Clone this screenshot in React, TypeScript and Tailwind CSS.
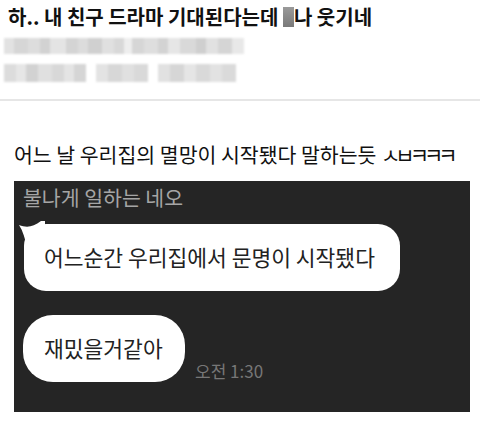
import React from 'react';

const font = { fontFamily: '"Noto Sans CJK KR", "Noto Sans", sans-serif' };

// pixelated blur blocks (widths in px, grey level classes)
const line1 = [
  ['w-[10px]', 'bg-[#e2e2e2]'], ['w-[14px]', 'bg-[#d6d6d6]'], ['w-[12px]', 'bg-[#dddddd]'], ['w-[10px]', 'bg-[#d2d2d2]'],
  ['w-[16px]', 'bg-[#e4e4e4]'], ['w-[12px]', 'bg-[#d4d4d4]'], ['w-[10px]', 'bg-[#dcdcdc]'], ['w-[14px]', 'bg-[#d0d0d0]'],
  ['w-[12px]', 'bg-[#e0e0e0]'], ['w-[10px]', 'bg-[#d8d8d8]'], ['w-[8px]', 'bg-[#eeeeee]'], ['w-[12px]', 'bg-[#d6d6d6]'],
  ['w-[14px]', 'bg-[#dedede]'], ['w-[10px]', 'bg-[#d3d3d3]'], ['w-[12px]', 'bg-[#e6e6e6]'], ['w-[16px]', 'bg-[#d9d9d9]'],
  ['w-[10px]', 'bg-[#cfcfcf]'], ['w-[12px]', 'bg-[#e1e1e1]'], ['w-[14px]', 'bg-[#d5d5d5]'], ['w-[12px]', 'bg-[#e8e8e8]'],
];

const line2a = [
  ['w-[12px]', 'bg-[#dcdcdc]'], ['w-[10px]', 'bg-[#e6e6e6]'], ['w-[12px]', 'bg-[#d2d2d2]'], ['w-[14px]', 'bg-[#e0e0e0]'],
  ['w-[12px]', 'bg-[#d8d8d8]'], ['w-[10px]', 'bg-[#e4e4e4]'], ['w-[12px]', 'bg-[#d5d5d5]'],
];
const line2b = [
  ['w-[12px]', 'bg-[#e3e3e3]'], ['w-[14px]', 'bg-[#d7d7d7]'], ['w-[12px]', 'bg-[#e0e0e0]'], ['w-[14px]', 'bg-[#d9d9d9]'],
];
const line2c = [
  ['w-[12px]', 'bg-[#e1e1e1]'], ['w-[14px]', 'bg-[#d6d6d6]'], ['w-[12px]', 'bg-[#e5e5e5]'], ['w-[14px]', 'bg-[#d9d9d9]'],
  ['w-[12px]', 'bg-[#e2e2e2]'], ['w-[14px]', 'bg-[#dadada]'],
];

function Blocks({ items, h }: { items: string[][]; h: string }) {
  return (
    <div className={`flex ${h} blur-[1px]`}>
      {items.map(([w, c], i) => (
        <div key={i} className={`${w} h-full ${c}`} />
      ))}
    </div>
  );
}

export default function App() {
  return (
    <div className="w-[480px] h-[422px] bg-white overflow-hidden" style={font}>
      {/* Post header */}
      <div className="pl-[8px] pt-[4px]">
        <h1 className="text-[20px] leading-[26px] font-bold text-[#111] flex items-center">
          하.. 내 친구 드라마 기대된다는데&nbsp;
          <span className="inline-block w-[11px] h-[20px] bg-gradient-to-b from-[#9a9a9a] to-[#7a7a7a]" />
          나 웃기네
        </h1>
      </div>
      <div className="pl-[4px] mt-[8px] flex flex-col gap-[10px]">
        <Blocks items={line1} h="h-[16px]" />
        <div className="flex gap-[10px] h-[18px]">
          <Blocks items={line2a} h="h-[18px]" />
          <Blocks items={line2b} h="h-[18px]" />
          <Blocks items={line2c} h="h-[18px]" />
        </div>
      </div>
      <div className="mt-[17px] border-t-2 border-[#e6e6e6]" />

      {/* Body */}
      <p className="mt-[38px] pl-[14px] h-[30px] text-[20.5px] leading-[30px] text-[#111] whitespace-nowrap">
        어느 날 우리집의 멸망이 시작됐다 말하는듯 <span className="text-[21px] leading-[20px] tracking-[-5px]">ㅅㅂㅋㅋㅋ</span>
      </p>

      {/* Chat screenshot */}
      <div className="mt-[12px] ml-[14px] w-[456px] h-[231px] bg-[#252525] pt-[3px] pl-[9px]">
        <div className="text-[20.5px] leading-[27px] text-[#a5a5a5]">불나게 일하는 네오</div>
        <div className="relative mt-[13px] ml-[1px] w-[376px] h-[67px] bg-white rounded-[22px] flex items-center pl-[20px]">
          <svg className="absolute -left-[5px] -top-[3px]" width="26" height="26" viewBox="0 0 26 26">
            <path d="M0 4 C8 7 14 6 22 0 L26 0 L26 26 L8 26 C6 18 4 10 0 4 Z" fill="#fff" />
          </svg>
          <span className="relative text-[21.5px] text-[#222]">어느순간 우리집에서 문명이 시작됐다</span>
        </div>
        <div className="mt-[24px] flex items-end gap-[10px]">
          <div className="w-[162px] h-[67px] bg-white rounded-[30px] flex items-center pl-[21px]">
            <span className="text-[21.5px] text-[#222]">재밌을거같아</span>
          </div>
          <span className="mb-[-1px] text-[17px] leading-[24px] text-[#777]">오전 1:30</span>
        </div>
      </div>
    </div>
  );
}
